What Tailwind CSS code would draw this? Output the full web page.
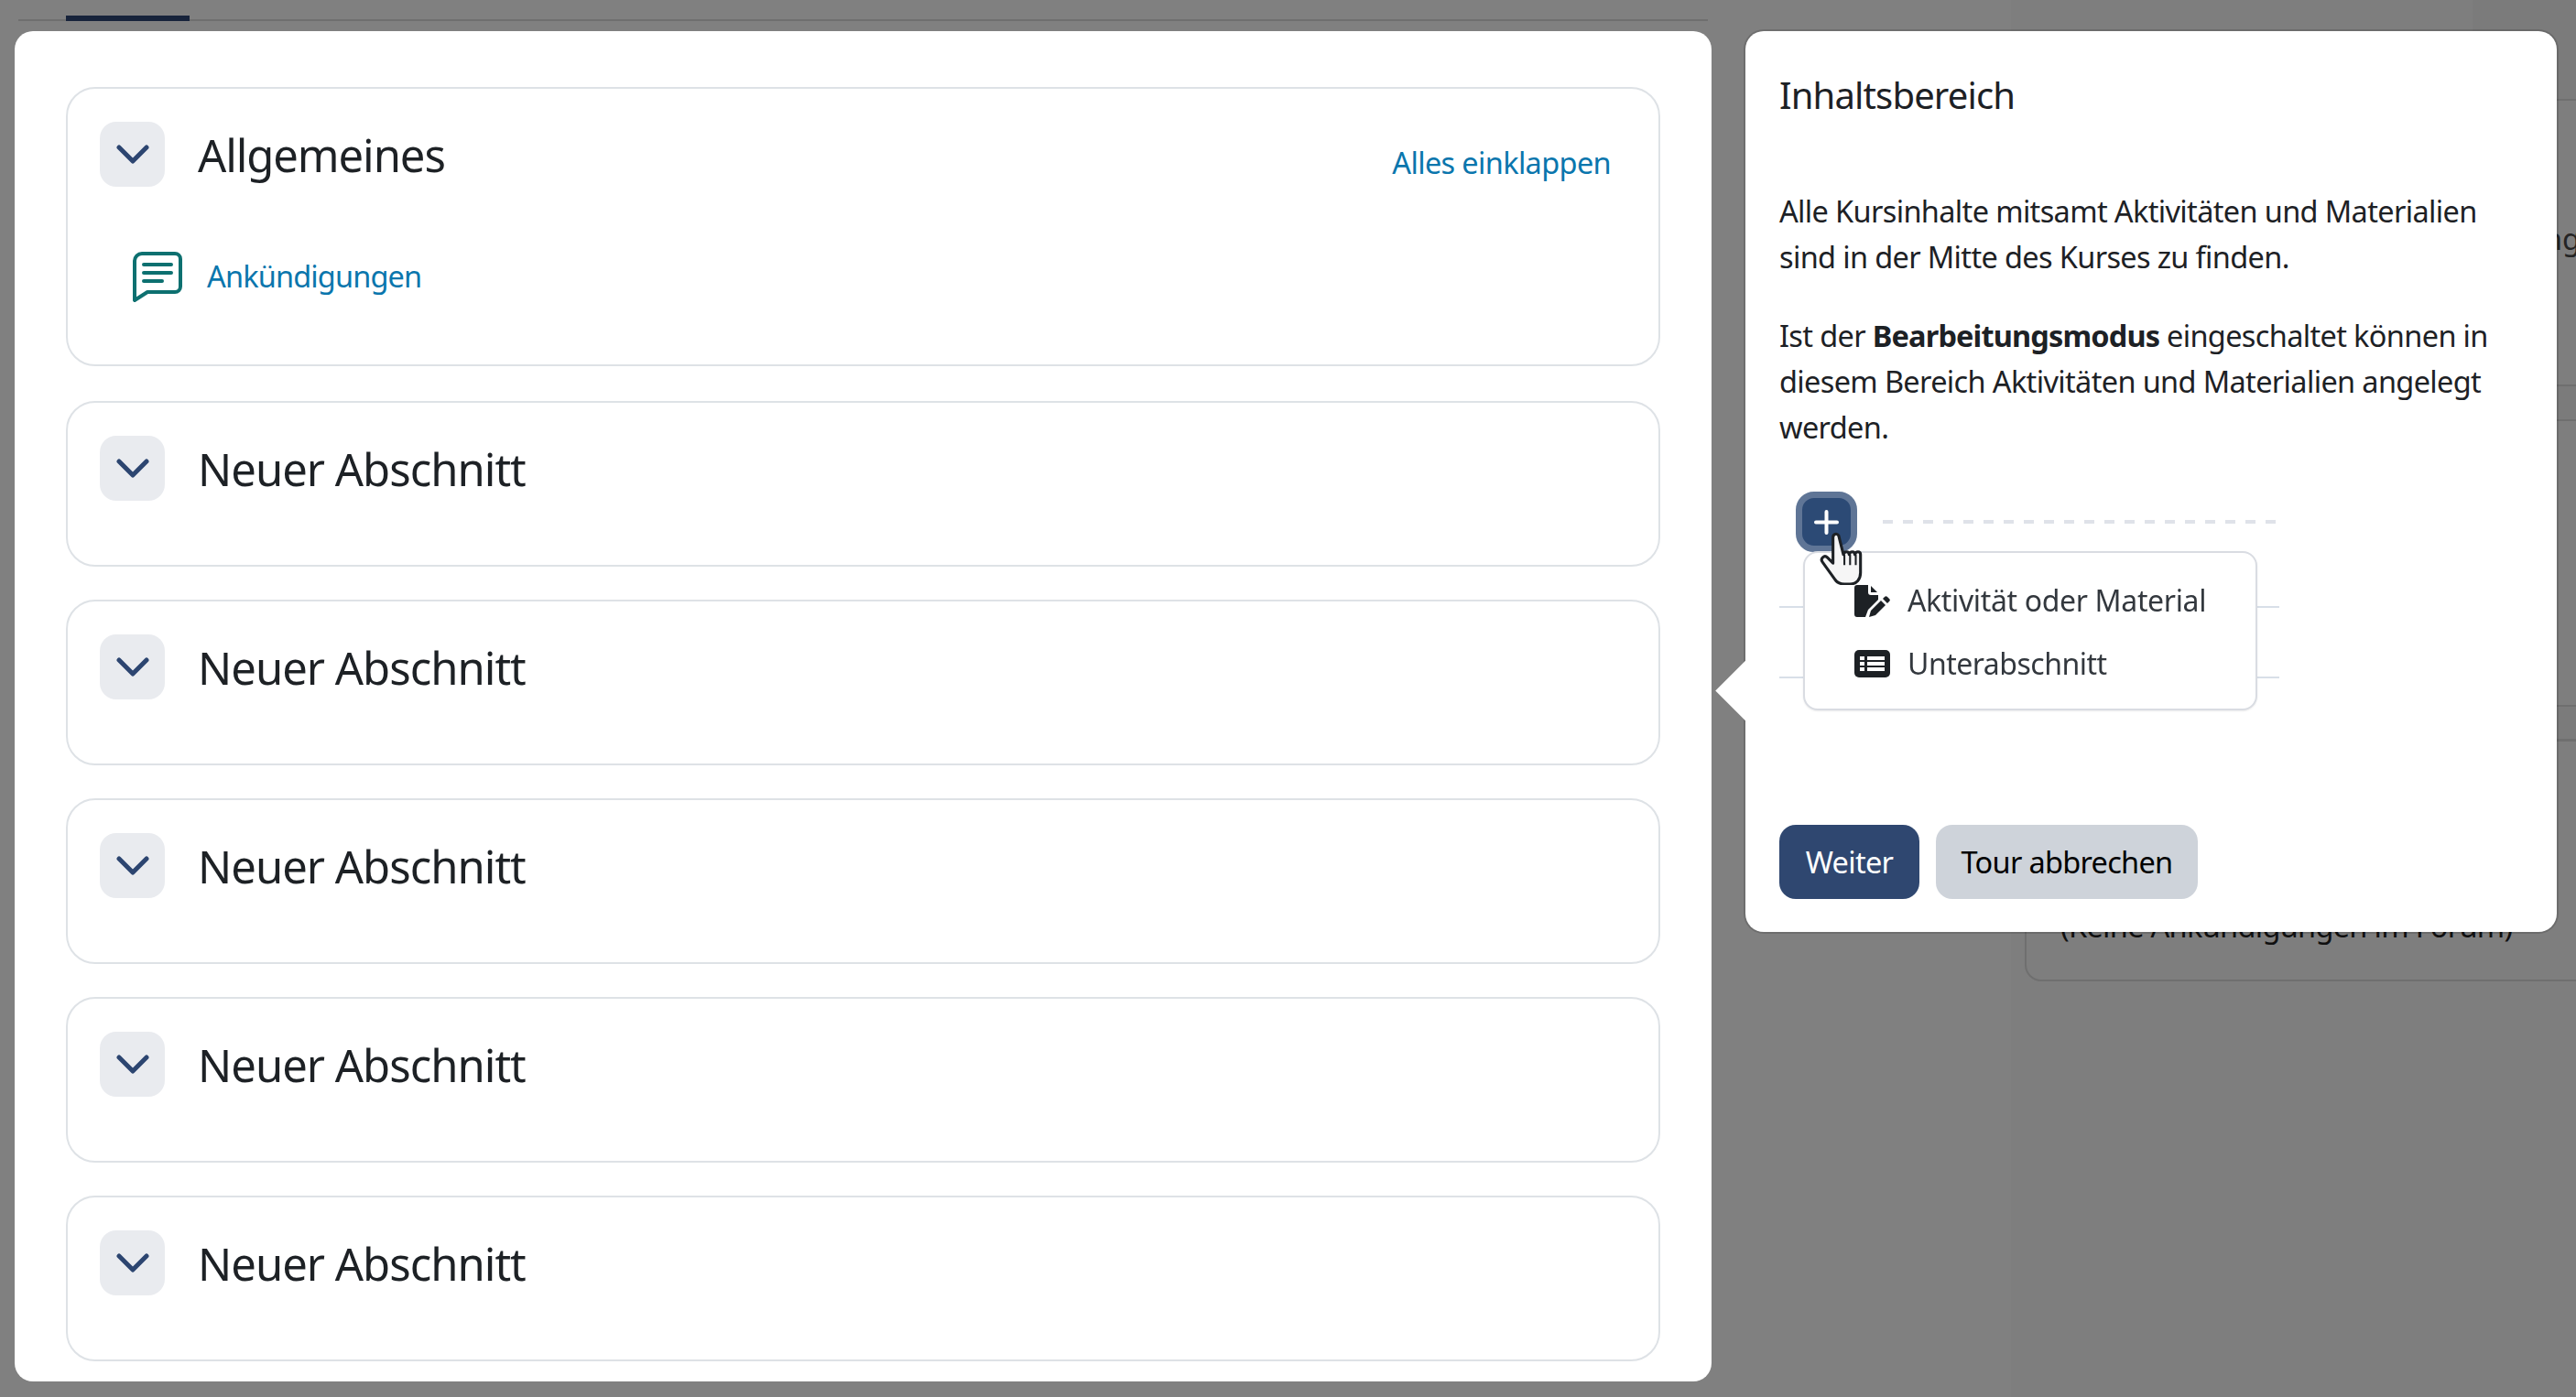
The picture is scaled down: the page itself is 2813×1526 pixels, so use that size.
<!DOCTYPE html>
<html lang="de">
<head>
  <meta charset="UTF-8">
  <title>Kurs - Inhaltsbereich</title>
  <script src="https://cdn.jsdelivr.net/npm/@tailwindcss/browser@4"></script>
</head>
<body class="bg-[#808080] font-['Noto_Sans',sans-serif] text-[#1d2125]">
  <div class="relative w-[2813px] h-[1526px] overflow-hidden">
    <!-- Page behind the overlay -->
    <div class="absolute top-0 bottom-0 left-[2196px] right-0 bg-[#7e7e7e]"></div>
    <div class="absolute left-[20px] top-[21px] w-[1845px] h-[2px] bg-[#6f6f6f]"></div>
    <div class="absolute left-[72px] top-[17px] w-[135px] h-[6px] bg-[#17233b]"></div>
    <!-- Sidebar blocks, nearly all hidden by the tour step -->
    <div class="absolute left-[2700px] top-0 right-0 h-[110px] bg-[#7b7b7b] border-b-2 border-[#6f6f6f]"></div>
    <div class="absolute left-[2778px] top-[236px] text-[32.5px] leading-[50px] text-[#242424]">ng</div>
    <div class="absolute left-[2700px] top-[420px] right-0 h-[40px] bg-[#7b7b7b] border-y-2 border-[#6f6f6f]"></div>
    <div class="absolute left-[2700px] top-[770px] right-0 h-[39px] bg-[#7b7b7b] border-y-2 border-[#6f6f6f]"></div>
    <div class="absolute left-[2211px] top-[808px] w-[700px] h-[264px] rounded-[18px] border-2 border-[#6f6f6f]"></div>
    <div class="absolute left-[2250px] top-[988px] text-[32.5px] text-[#101010] tracking-[-0.7px] whitespace-nowrap">(Keine Ankündigungen im Forum)</div>

    <div class="relative flex items-start pl-4 pt-[34px]">
      <!-- Course content -->
      <main class="w-[1853px] h-[1475px] rounded-[20px] bg-white px-[56px] pt-[61px] flex flex-col gap-[36px]">
        <section class="h-[305px] mb-[2px] rounded-[32px] border-2 border-[#dee2e6] pt-[35px] pl-[35px] pr-[52px]">
          <div class="flex items-center">
            <button class="w-[71px] h-[71px] rounded-[18px] bg-[#e9ebef] flex items-center justify-center">
              <svg class="w-[36px] h-[22px]" viewBox="0 0 36 22" fill="none" stroke="#2c4570" stroke-width="5" stroke-linecap="round" stroke-linejoin="round"><path d="M3 3l15 15L33 3"/></svg>
            </button>
            <h3 class="ml-[36px] mt-[2px] text-[49px] leading-[71px] tracking-[-1.1px]">Allgemeines</h3>
            <a class="ml-auto mt-[19px] text-[32.5px] text-[#0a76ad] tracking-[-0.65px]">Alles einklappen</a>
          </div>
          <div class="flex items-center mt-[69px] ml-[34px]">
            <svg class="w-[56px] h-[56px]" viewBox="0 0 56 56" fill="none" stroke="#0d7070" stroke-linecap="round" stroke-linejoin="round"><path stroke-width="4" d="M12 3h36a6 6 0 0 1 6 6v30a6 6 0 0 1-6 6H18L4 54V11a8 8 0 0 1 8-8z"/><path stroke-width="4" d="M14 15h30M14 24h30M14 33h20"/></svg>
            <a class="ml-[27px] text-[32.5px] text-[#0a76ad] tracking-[-0.85px]">Ankündigungen</a>
          </div>
        </section>
        <section class="h-[181px] rounded-[32px] border-2 border-[#dee2e6] pt-[35px] pl-[35px]">
          <div class="flex items-center">
            <button class="w-[71px] h-[71px] rounded-[18px] bg-[#e9ebef] flex items-center justify-center">
              <svg class="w-[36px] h-[22px]" viewBox="0 0 36 22" fill="none" stroke="#2c4570" stroke-width="5" stroke-linecap="round" stroke-linejoin="round"><path d="M3 3l15 15L33 3"/></svg>
            </button>
            <h3 class="ml-[36px] mt-[2px] text-[49px] leading-[71px] tracking-[-1px]">Neuer Abschnitt</h3>
          </div>
        </section>
        <section class="h-[181px] rounded-[32px] border-2 border-[#dee2e6] pt-[35px] pl-[35px]">
          <div class="flex items-center">
            <button class="w-[71px] h-[71px] rounded-[18px] bg-[#e9ebef] flex items-center justify-center">
              <svg class="w-[36px] h-[22px]" viewBox="0 0 36 22" fill="none" stroke="#2c4570" stroke-width="5" stroke-linecap="round" stroke-linejoin="round"><path d="M3 3l15 15L33 3"/></svg>
            </button>
            <h3 class="ml-[36px] mt-[2px] text-[49px] leading-[71px] tracking-[-1px]">Neuer Abschnitt</h3>
          </div>
        </section>
        <section class="h-[181px] rounded-[32px] border-2 border-[#dee2e6] pt-[35px] pl-[35px]">
          <div class="flex items-center">
            <button class="w-[71px] h-[71px] rounded-[18px] bg-[#e9ebef] flex items-center justify-center">
              <svg class="w-[36px] h-[22px]" viewBox="0 0 36 22" fill="none" stroke="#2c4570" stroke-width="5" stroke-linecap="round" stroke-linejoin="round"><path d="M3 3l15 15L33 3"/></svg>
            </button>
            <h3 class="ml-[36px] mt-[2px] text-[49px] leading-[71px] tracking-[-1px]">Neuer Abschnitt</h3>
          </div>
        </section>
        <section class="h-[181px] rounded-[32px] border-2 border-[#dee2e6] pt-[35px] pl-[35px]">
          <div class="flex items-center">
            <button class="w-[71px] h-[71px] rounded-[18px] bg-[#e9ebef] flex items-center justify-center">
              <svg class="w-[36px] h-[22px]" viewBox="0 0 36 22" fill="none" stroke="#2c4570" stroke-width="5" stroke-linecap="round" stroke-linejoin="round"><path d="M3 3l15 15L33 3"/></svg>
            </button>
            <h3 class="ml-[36px] mt-[2px] text-[49px] leading-[71px] tracking-[-1px]">Neuer Abschnitt</h3>
          </div>
        </section>
        <section class="h-[181px] rounded-[32px] border-2 border-[#dee2e6] pt-[35px] pl-[35px]">
          <div class="flex items-center">
            <button class="w-[71px] h-[71px] rounded-[18px] bg-[#e9ebef] flex items-center justify-center">
              <svg class="w-[36px] h-[22px]" viewBox="0 0 36 22" fill="none" stroke="#2c4570" stroke-width="5" stroke-linecap="round" stroke-linejoin="round"><path d="M3 3l15 15L33 3"/></svg>
            </button>
            <h3 class="ml-[36px] mt-[2px] text-[49px] leading-[71px] tracking-[-1px]">Neuer Abschnitt</h3>
          </div>
        </section>
      </main>

      <!-- Tour step -->
      <aside class="relative ml-[37px] w-[886px] h-[984px] rounded-[20px] bg-white px-[37px] pt-[42px] shadow-[0_0_0_2px_rgba(0,0,0,0.14)]">
        <div class="absolute left-[-23px] top-[697px] w-[47px] h-[47px] rotate-45 bg-white"></div>
        <h5 class="relative text-[40px] leading-[56px] tracking-[-0.85px]">Inhaltsbereich</h5>
        <div class="relative mt-[74px] text-[32.5px] leading-[50px] tracking-[-0.65px]">
          <p>Alle Kursinhalte mitsamt Aktivitäten und Materialien<br>sind in der Mitte des Kurses zu finden.</p>
          <p class="mt-[36px]">Ist der <strong class="font-bold tracking-[-0.85px]">Bearbeitungsmodus</strong> eingeschaltet können in<br>diesem Bereich Aktivitäten und Materialien angelegt<br>werden.</p>
        </div>
        <!-- Illustration -->
        <div class="relative mt-[45px] h-[260px] blur-[0.5px]">
          <div class="absolute left-[18px] top-0 w-[67px] h-[66px] rounded-[20px] bg-[#2c4a75] border-[7px] border-[#5f7596] flex items-center justify-center">
            <svg class="w-[27px] h-[27px]" viewBox="0 0 27 27" stroke="#fff" stroke-width="4" stroke-linecap="round"><path d="M13.5 2v23M2 13.5h23"/></svg>
          </div>
          <div class="absolute left-[113px] top-[31px] w-[436px] h-[4px] bg-[repeating-linear-gradient(90deg,#dfe2e9_0_11px,transparent_11px_22px)]"></div>
          <div class="absolute left-0 top-[125px] w-[546px] h-[2px] bg-[#d8dfe8]"></div>
          <div class="absolute left-0 top-[202px] w-[546px] h-[2px] bg-[#d8dfe8]"></div>
          <div class="absolute left-[26px] top-[65px] w-[496px] h-[174px] rounded-[16px] border-2 border-[#d9dce2] bg-white pt-[30px] pl-[54px] shadow-[0_1px_2px_rgba(0,0,0,0.08)]">
            <div class="flex items-center h-[44px] text-[32px] text-[#33383e] tracking-[-0.35px]">
              <svg class="w-[39px] h-[35px] shrink-0" viewBox="0 0 39 35" fill="#1d2125"><path d="M3 0h12v8a3 3 0 0 0 3 3h8v5L15 27l-3 8H3a3 3 0 0 1-3-3V3a3 3 0 0 1 3-3z"/><path d="M18 1l7 7h-7z"/><path d="M16 35l2-7 11-11 5 5-11 11z"/><path d="M31 15l2-2a2 2 0 0 1 3 0l2 2a2 2 0 0 1 0 3l-2 2z"/></svg>
              <span class="ml-[19px]">Aktivität oder Material</span>
            </div>
            <div class="flex items-center h-[44px] mt-[25px] text-[32px] text-[#33383e] tracking-[-0.5px]">
              <svg class="w-[39px] h-[30px] shrink-0" viewBox="0 0 39 30"><rect width="39" height="30" rx="5" fill="#1d2125"/><path fill="#fff" d="M6 7h5v4H6zM14 7h19v4H14zM6 13h5v4H6zM14 13h19v4H14zM6 19h5v4H6zM14 19h19v4H14z"/></svg>
              <span class="ml-[19px]">Unterabschnitt</span>
            </div>
          </div>
          <svg class="absolute left-[44px] top-[44px] w-[50px] h-[58px]" viewBox="0 0 48 56" fill="#f6f6f6" stroke="#1d2125" stroke-width="3" stroke-linejoin="round"><path d="M20 4c-2-3-6-2-6 2v27l-6-6c-3-3-8 1-5 5l13 18c2 3 6 5 10 5h6c7 0 11-5 11-12V24c0-4-5-4-6 0 0-4-5-4-6 0 0-4-5-4-6 0L21 8z"/><path fill="none" stroke-width="2" d="M26 24v11M32 24v11M38 24v11"/></svg>
        </div>
        <div class="relative mt-[104px] flex gap-[18px] text-[32.5px] tracking-[-0.7px]">
          <button class="w-[153px] h-[81px] pt-[2px] rounded-[18px] bg-[#2f4770] text-white">Weiter</button>
          <button class="w-[286px] h-[81px] pt-[2px] rounded-[18px] bg-[#ced3da] text-black">Tour abbrechen</button>
        </div>
      </aside>
    </div>
  </div>
</body>
</html>
